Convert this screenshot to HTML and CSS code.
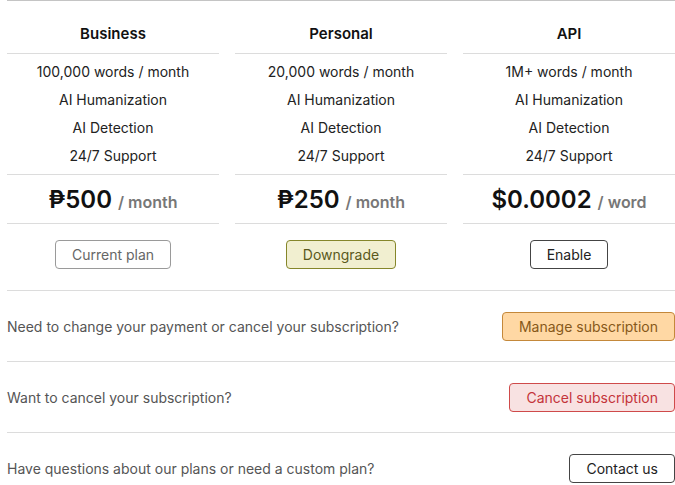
FILE: index.html
```html
<!DOCTYPE html>
<html>
<head>
    <title>Plans</title>
    <link rel="stylesheet" href="styles.css">
</head>
<body>
    <div class="page">
        <div class="plans">
            <div class="plan">
                <div class="plan-name">Business</div>
                <div class="features">
                    <div>100,000 words / month</div>
                    <div>AI Humanization</div>
                    <div>AI Detection</div>
                    <div>24/7 Support</div>
                </div>
                <div class="price">₱500 <span class="unit">/ month</span></div>
                <div class="plan-action">
                    <button class="btn current">Current plan</button>
                </div>
            </div>
            <div class="plan">
                <div class="plan-name">Personal</div>
                <div class="features">
                    <div>20,000 words / month</div>
                    <div>AI Humanization</div>
                    <div>AI Detection</div>
                    <div>24/7 Support</div>
                </div>
                <div class="price">₱250 <span class="unit">/ month</span></div>
                <div class="plan-action">
                    <button class="btn downgrade">Downgrade</button>
                </div>
            </div>
            <div class="plan">
                <div class="plan-name">API</div>
                <div class="features">
                    <div>1M+ words / month</div>
                    <div>AI Humanization</div>
                    <div>AI Detection</div>
                    <div>24/7 Support</div>
                </div>
                <div class="price">$0.0002 <span class="unit">/ word</span></div>
                <div class="plan-action">
                    <button class="btn plain">Enable</button>
                </div>
            </div>
        </div>

        <div class="row">
            <span>Need to change your payment or cancel your subscription?</span>
            <button class="btn manage">Manage subscription</button>
        </div>
        <div class="row">
            <span>Want to cancel your subscription?</span>
            <button class="btn cancel">Cancel subscription</button>
        </div>
        <div class="row">
            <span>Have questions about our plans or need a custom plan?</span>
            <button class="btn plain">Contact us</button>
        </div>
    </div>
</body>
</html>
```

FILE: styles.css
```css
body {
    margin: 0;
    font-family: Inter, "Noto Sans", sans-serif;
    color: #1a1a1a;
    background: #fff;
}

.page {
    width: 668px;
    margin-left: 7px;
    border-top: 1px solid #c4c4c4;
}

.plans {
    display: grid;
    grid-template-columns: repeat(3, 212px);
    column-gap: 16px;
}

.plan {
    text-align: center;
}

.plan-name {
    padding: 22px 0 8px;
    line-height: 22px;
    font-size: 15px;
    font-weight: 600;
    color: #111;
    border-bottom: 1px solid #dcdcdc;
}

.features {
    padding: 4px 0;
    font-size: 14px;
    line-height: 28px;
    color: #222;
    border-bottom: 1px solid #dcdcdc;
}

.price {
    height: 48px;
    display: flex;
    align-items: center;
    justify-content: center;
    gap: 6px;
    font-size: 24px;
    font-weight: 600;
    color: #111;
    border-bottom: 1px solid #dcdcdc;
}

.price .unit {
    font-size: 16px;
    font-weight: 600;
    color: #777;
    padding-top: 5px;
}

.plan-action {
    padding: 16px 0 21px;
}

.btn {
    font-family: Inter, "Noto Sans", sans-serif;
    font-size: 14px;
    line-height: 19px;
    padding: 4px 16px;
    border-radius: 4px;
    border: 1px solid #444;
    background: #fff;
    color: #222;
    cursor: pointer;
}

.btn.current {
    border-color: #9a9a9a;
    color: #666;
}

.btn.downgrade {
    background: #f1efd0;
    border-color: #85862a;
    color: #5a591c;
}

.btn.manage {
    background: #ffd8a4;
    border-color: #c4883a;
    color: #87581a;
}

.btn.cancel {
    background: #f8e2e2;
    border-color: #cf4a4a;
    color: #c4343a;
}

.row {
    height: 70px;
    display: flex;
    align-items: center;
    justify-content: space-between;
    border-top: 1px solid #dcdcdc;
    font-size: 14px;
    color: #555;
}
```
